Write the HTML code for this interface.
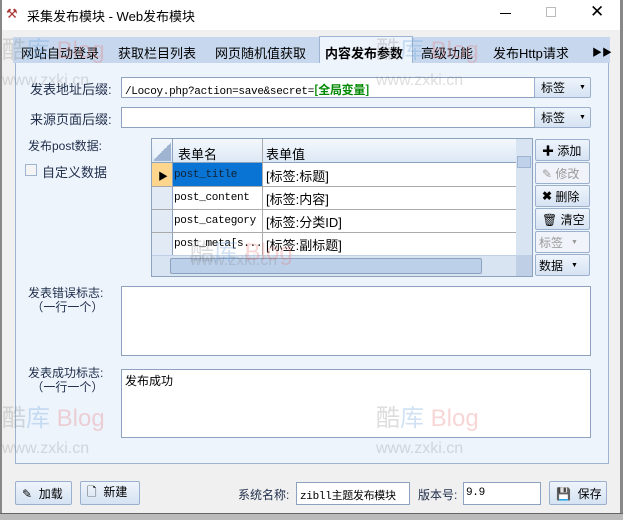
<!DOCTYPE html>
<html><head><meta charset="utf-8"><style>
*{box-sizing:border-box;margin:0;padding:0}
body{width:623px;height:520px;overflow:hidden;background:#f0f0f0;font-family:"Liberation Sans","Noto Sans CJK SC",sans-serif;font-size:12px;color:#000;position:relative}
.a{position:absolute;white-space:nowrap}
.inp{position:absolute;background:#fff;border:1px solid #8da2bf}
.btn{position:absolute;border:1px solid #9bb0cc;border-radius:2px;background:linear-gradient(#eef4fb,#d6e3f3);font-size:12px;display:flex;align-items:center;padding-left:6px}
.mono{font-family:"Liberation Mono","Noto Sans CJK SC",monospace;font-size:11px;letter-spacing:-0.3px}
.lbl{color:#1e2d4a}
.wm{position:absolute;font-size:24px;color:rgba(120,120,120,.25);white-space:nowrap}
.wm b{font-weight:normal;color:rgba(230,120,120,.3)}
.wm i{font-style:normal;color:rgba(100,160,220,.3)}
</style></head><body>
<div class="a" style="left:0;top:0;width:623px;height:30px;background:#fff"></div>
<div class="a" style="left:0;top:0;width:2px;height:520px;background:#888"></div>
<div class="a" style="left:620px;top:0;width:3px;height:520px;background:#888"></div>
<div class="a" style="left:6px;top:6px;font-size:13px;color:#a33">⚒</div>
<div class="a" style="left:27px;top:6px;font-size:13px">采集发布模块 - Web发布模块</div>
<div class="a" style="left:500px;top:13px;width:11px;height:1px;background:#000"></div>
<div class="a" style="left:546px;top:7px;width:10px;height:10px;border:1px solid #bbb"></div>
<div class="a" style="left:590px;top:2px;font-size:17px;font-weight:300">✕</div>

<div class="a" style="left:13px;top:37px;width:597px;height:26px;background:#c7d8ee"></div>
<div class="a" style="left:319px;top:36px;width:94px;height:28px;background:#eef4fc;border:1px solid #9fb4d0;border-bottom:none"></div>
<div class="a" style="left:21px;top:43px;font-size:13px">网站自动登录</div>
<div class="a" style="left:118px;top:43px;font-size:13px">获取栏目列表</div>
<div class="a" style="left:215px;top:43px;font-size:13px">网页随机值获取</div>
<div class="a" style="left:325px;top:43px;font-size:13px;font-weight:bold">内容发布参数</div>
<div class="a" style="left:421px;top:43px;font-size:13px">高级功能</div>
<div class="a" style="left:493px;top:43px;font-size:13px">发布Http请求</div>
<div class="a" style="left:592px;top:44px;font-size:10px">▶▶</div>

<div class="a" style="left:15px;top:63px;width:594px;height:401px;background:#eef4fc;border:1px solid #9fb4d0;border-top:none"></div>

<div class="a lbl" style="left:30px;top:79px;font-size:13px">发表地址后缀:</div>
<div class="inp mono" style="left:121px;top:77px;width:414px;height:21px;padding:3px 3px">/Locoy.php?action=save&amp;secret=<b style="color:#080;font-family:'Noto Sans CJK SC';font-size:12px">[全局变量]</b></div>
<div class="btn" style="left:534px;top:77px;width:57px;height:21px">标签<span style="margin-left:14px;font-size:7px">▼</span></div>
<div class="a lbl" style="left:30px;top:109px;font-size:13px">来源页面后缀:</div>
<div class="inp" style="left:121px;top:107px;width:414px;height:21px"></div>
<div class="btn" style="left:534px;top:107px;width:57px;height:21px">标签<span style="margin-left:14px;font-size:7px">▼</span></div>

<div class="a lbl" style="left:28px;top:137px;font-size:12px">发布post数据:</div>
<div class="a" style="left:25px;top:164px;width:12px;height:12px;border:1px solid #9fb4d0;background:#f4f4f4"></div>
<div class="a lbl" style="left:42px;top:162px;font-size:13px">自定义数据</div>

<div class="a" style="left:151px;top:138px;width:382px;height:139px;border:1px solid #8da2bf;background:#bfd0e6"></div>
<div class="a" style="left:152px;top:139px;width:364px;height:116px;background:#fff;overflow:hidden">
 <div class="a" style="left:0;top:0;width:364px;height:24px;background:linear-gradient(#f4f8fd,#dde8f5);border-bottom:1px solid #8da2bf"></div>
 <div class="a" style="left:2px;top:2px;width:17px;height:20px;background:linear-gradient(135deg,#eef4fb 50%,#9fb4d0 50%)"></div>
 <div class="a" style="left:20px;top:0;width:1px;height:116px;background:#8da2bf"></div>
 <div class="a" style="left:110px;top:0;width:1px;height:116px;background:#aaa"></div>
 <div class="a" style="left:26px;top:5px;font-size:13px">表单名</div>
 <div class="a" style="left:114px;top:5px;font-size:13px">表单值</div>
 <div class="a" style="left:0;top:24px;width:20px;height:92px;background:#e2eaf5"></div>
 <div class="a" style="left:0;top:24px;width:20px;height:23px;background:#fdd58c"></div>
 <div class="a" style="left:6px;top:29px;font-size:10px">▶</div>
 <div class="a" style="left:21px;top:24px;width:89px;height:23px;background:#0a74d4"></div>
 <div class="a" style="left:0;top:47px;width:364px;height:1px;background:#aaa"></div>
 <div class="a" style="left:0;top:70px;width:364px;height:1px;background:#aaa"></div>
 <div class="a" style="left:0;top:93px;width:364px;height:1px;background:#aaa"></div>
 <div class="a mono" style="left:22px;top:30px;color:#123">post_title</div>
 <div class="a mono" style="left:22px;top:53px">post_content</div>
 <div class="a mono" style="left:22px;top:76px">post_category</div>
 <div class="a mono" style="left:22px;top:99px">post_meta[s...</div>
 <div class="a" style="left:114px;top:27px;font-size:13px">[标签:标题]</div>
 <div class="a" style="left:114px;top:50px;font-size:13px">[标签:内容]</div>
 <div class="a" style="left:114px;top:73px;font-size:13px">[标签:分类ID]</div>
 <div class="a" style="left:114px;top:96px;font-size:13px">[标签:副标题]</div>
</div>
<div class="a" style="left:516px;top:139px;width:16px;height:116px;background:#d9e4f2"></div>
<div class="a" style="left:517px;top:156px;width:14px;height:12px;background:#c0d2ea;border:1px solid #9fb4d0"></div>
<div class="a" style="left:152px;top:256px;width:364px;height:20px;background:#d9e4f2"></div>
<div class="a" style="left:170px;top:258px;width:312px;height:16px;background:#bcd0ea;border:1px solid #8da2bf;border-radius:2px"></div>

<div class="btn" style="left:535px;top:139px;width:55px;height:22px">✚&nbsp;添加</div>
<div class="btn" style="left:535px;top:162px;width:55px;height:22px;color:#999;background:#f0f4fa">✎&nbsp;修改</div>
<div class="btn" style="left:535px;top:185px;width:55px;height:22px"><b>✖</b>&nbsp;删除</div>
<div class="btn" style="left:535px;top:208px;width:55px;height:22px">🗑&nbsp;清空</div>
<div class="btn" style="left:535px;top:231px;width:55px;height:22px;color:#999;background:#f0f4fa;padding-left:3px">标签<span style="margin-left:8px;font-size:7px">▼</span></div>
<div class="btn" style="left:535px;top:254px;width:55px;height:22px;padding-left:3px">数据<span style="margin-left:8px;font-size:7px">▼</span></div>

<div class="a lbl" style="left:28px;top:286px;font-size:12px;text-align:right;line-height:14px">发表错误标志:<br>（一行一个）</div>
<div class="inp" style="left:121px;top:286px;width:470px;height:70px"></div>
<div class="a lbl" style="left:28px;top:366px;font-size:12px;text-align:right;line-height:14px">发表成功标志:<br>（一行一个）</div>
<div class="inp" style="left:121px;top:369px;width:470px;height:69px;padding:2px 3px;font-size:12px">发布成功</div>

<div class="btn" style="left:15px;top:481px;width:57px;height:24px">✎&nbsp;&nbsp;加载</div>
<div class="btn" style="left:80px;top:481px;width:60px;height:24px">🗋&nbsp;&nbsp;新建</div>
<div class="a lbl" style="left:238px;top:486px;font-size:12px">系统名称:</div>
<div class="inp mono" style="left:296px;top:482px;width:114px;height:23px;padding:4px 3px;overflow:hidden">zibll主题发布模块模</div>
<div class="a lbl" style="left:418px;top:486px;font-size:12px">版本号:</div>
<div class="inp mono" style="left:463px;top:482px;width:78px;height:23px;padding:4px 2px">9.9</div>
<div class="btn" style="left:549px;top:481px;width:58px;height:24px">💾&nbsp;&nbsp;保存</div>
<div class="a" style="left:0;top:513px;width:623px;height:7px;background:#bbb;border-top:1px solid #666"></div>

<div class="wm" style="left:2px;top:30px">酷<i>库</i> <b>Blog</b></div>
<div class="wm" style="left:2px;top:72px;font-size:16px">www.zxki.cn</div>
<div class="wm" style="left:376px;top:30px">酷<i>库</i> <b>Blog</b></div>
<div class="wm" style="left:376px;top:72px;font-size:16px">www.zxki.cn</div>
<div class="wm" style="left:190px;top:232px">酷<i>库</i> <b>Blog</b></div>
<div class="wm" style="left:190px;top:252px;font-size:16px">www.zxki.cn</div>
<div class="wm" style="left:2px;top:398px">酷<i>库</i> <b>Blog</b></div>
<div class="wm" style="left:2px;top:440px;font-size:16px">www.zxki.cn</div>
<div class="wm" style="left:376px;top:398px">酷<i>库</i> <b>Blog</b></div>
<div class="wm" style="left:376px;top:440px;font-size:16px">www.zxki.cn</div>
</body></html>
